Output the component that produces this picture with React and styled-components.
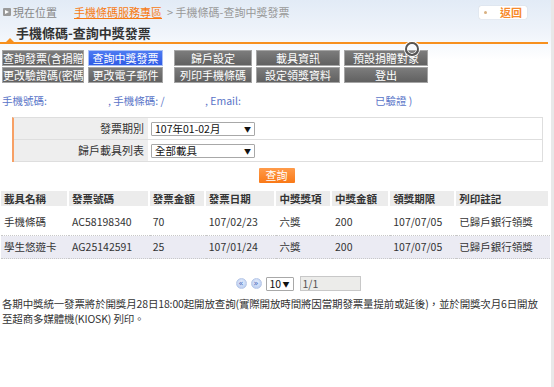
import React from "react";
import styled, { createGlobalStyle } from "styled-components";

const GlobalStyle = createGlobalStyle`
  html, body {
    margin: 0;
    padding: 0;
    background: #ffffff;
  }
  body {
    font-family: "Noto Sans CJK TC", "Liberation Sans", sans-serif;
    font-size: 11px;
    color: #333;
  }
`;

const Page = styled.div`
  width: 554px;
  height: 387px;
  overflow: hidden;
  position: relative;
  background: linear-gradient(to bottom, #e2ebf6 0px, #eef3fa 30px, #ffffff 60px);
  border-right: 3px solid #e8e8e8;
  box-sizing: border-box;
`;

const TopBar = styled.div`
  display: flex;
  align-items: center;
  justify-content: space-between;
  height: 24px;
  padding: 0 24px 0 3px;
`;

const Crumbs = styled.div`
  display: flex;
  align-items: center;
  font-size: 11px;
  line-height: 14px;
  color: #888;
`;

const CrumbIcon = styled.span`
  display: inline-block;
  width: 8px;
  height: 8px;
  background: #9a9a9a;
  border-radius: 1px;
  margin-right: 2px;
  position: relative;
  &::after {
    content: "";
    position: absolute;
    left: 2px;
    top: 2px;
    border-left: 4px solid #fff;
    border-top: 2px solid transparent;
    border-bottom: 2px solid transparent;
  }
`;

const CrumbLink = styled.a`
  color: #f77b14;
  text-decoration: underline;
  margin-left: 17px;
`;

const CrumbCurrent = styled.span`
  margin-left: 5px;
  color: #999;
`;

const BackButton = styled.div`
  width: 48px;
  height: 13px;
  background: #fff;
  border-radius: 2px;
  box-shadow: 0 0 1px #bbb;
  display: flex;
  align-items: center;
  font-size: 11px;
  font-weight: bold;
  color: #f78a2c;
  &::before {
    content: "";
    width: 3px;
    height: 3px;
    border-radius: 50%;
    background: #d8b080;
    margin: 0 13px 0 5px;
  }
`;

const TitleBar = styled.div`
  position: relative;
  height: 18px;
  border-bottom: 2px solid #f7901e;
  margin-right: 3px;
  padding-left: 16px;
  font-size: 13px;
  font-weight: bold;
  line-height: 18px;
  color: #333;
  &::after {
    content: "";
    position: absolute;
    left: 6px;
    bottom: 0;
    border-left: 4px solid transparent;
    border-right: 4px solid transparent;
    border-bottom: 4px solid #f7901e;
  }
`;

const Menu = styled.div`
  display: grid;
  grid-template-columns: 82px 75px 85px 84px 84px;
  column-gap: 4px;
  row-gap: 1px;
  padding: 6px 0 0 2px;
  width: 440px;
  & > :nth-child(5n + 3) {
    margin-left: 7px;
  }
`;

const MenuButton = styled.div`
  height: 14px;
  line-height: 14px;
  font-size: 11px;
  text-align: center;
  white-space: nowrap;
  overflow: hidden;
  color: #fff;
  background: ${(p) =>
    p.active
      ? "linear-gradient(#4d7bf2, #2f5be6)"
      : "linear-gradient(#7c7c7c, #616161)"};
  border: 1px solid ${(p) => (p.active ? "#a9bff5" : "#a5a5a5")};
`;

const InfoLine = styled.div`
  display: flex;
  padding: 11px 0 0 2px;
  font-size: 10.5px;
  line-height: 14px;
  color: #5a75c8;
`;

const InfoItem = styled.span`
  width: ${(p) => p.w}px;
  white-space: nowrap;
`;

const QueryForm = styled.div`
  margin: 9px 8px 0 12px;
  border-left: 2px solid #f7a065;
  border-top: 1px solid #dedede;
  border-right: 1px solid #dedede;
`;

const FormRow = styled.div`
  display: flex;
  height: 21px;
  border-bottom: 1px solid #dedede;
`;

const FormLabel = styled.div`
  width: 130px;
  background: #eeeeee;
  text-align: right;
  padding-right: 4px;
  font-size: 11px;
  line-height: 21px;
  color: #333;
`;

const FormCell = styled.div`
  flex: 1;
  display: flex;
  align-items: center;
  padding-left: 3px;
  background: #fff;
`;

const SelectBox = styled.div`
  width: ${(p) => p.w || 96}px;
  height: 12px;
  border: 1px solid #a8a8a8;
  border-radius: 1px;
  background: #fff;
  display: flex;
  align-items: center;
  justify-content: space-between;
  padding: 0 3px;
  font-size: 10.5px;
  line-height: 12px;
  color: #111;
  box-sizing: content-box;
`;

const Arrow = styled.span`
  font-size: 7px;
  color: #111;
`;

const SubmitRow = styled.div`
  display: flex;
  justify-content: center;
  padding: 6px 0 0 0;
  margin-left: 2px;
`;

const SubmitButton = styled.div`
  width: 36px;
  height: 15px;
  background: linear-gradient(#ff9b4a, #f97917);
  color: #fff;
  font-size: 11px;
  line-height: 15px;
  text-align: center;
  border-radius: 1px;
`;

const Results = styled.table`
  margin: 8px 0 0 1px;
  width: 549px;
  border-collapse: separate;
  border-spacing: 0;
  font-size: 10.5px;
  color: #333;
`;

const Th = styled.th`
  height: 15px;
  background: #ececec;
  border-right: 2px solid #fff;
  text-align: left;
  padding: 0 0 0 3px;
  font-weight: bold;
  line-height: 15px;
  color: #333;
  width: ${(p) => p.w}px;
`;

const Tr = styled.tr`
  background: ${(p) => (p.alt ? "#ebebf3" : "#ffffff")};
`;

const Td = styled.td`
  height: ${(p) => (p.first ? 26 : 22)}px;
  padding: ${(p) => (p.first ? "3px 0 0 3px" : "0 0 0 3px")};
  border-bottom: 1px dotted #c8c8c8;
  line-height: 14px;
  white-space: nowrap;
`;

const Pager = styled.div`
  display: flex;
  align-items: center;
  justify-content: center;
  gap: 4px;
  padding: 17px 0 0 45px;
`;

const PageDot = styled.span`
  width: 11px;
  height: 11px;
  border-radius: 50%;
  background: radial-gradient(circle at 50% 40%, #eef4ff, #a9c1ec);
  border: 1px solid #b8c8e8;
  box-sizing: border-box;
  display: flex;
  align-items: center;
  justify-content: center;
  font-size: 8px;
  line-height: 8px;
  color: #3f63b8;
  font-family: "DejaVu Sans", sans-serif;
`;

const PageInput = styled.div`
  width: 57px;
  height: 13px;
  margin-left: 2px;
  background: #ececea;
  border: 1px solid #c8c8c8;
  font-size: 10.5px;
  line-height: 13px;
  padding-left: 2px;
  color: #555;
`;

const Note = styled.p`
  margin: 5px 2px 0 2px;
  font-size: 10.5px;
  line-height: 15px;
  color: #333;
  letter-spacing: -0.15px;
  white-space: nowrap;
`;

const Cursor = styled.span`
  position: absolute;
  left: 405px;
  top: 42px;
  width: 14px;
  height: 14px;
  border-radius: 50%;
  border: 2px solid #555;
  box-shadow: 0 0 0 1px #fff, inset 0 0 0 1px #fff;
  box-sizing: border-box;
`;

const menuItems = [
  "查詢發票(含捐贈",
  "查詢中獎發票",
  "歸戶設定",
  "載具資訊",
  "預設捐贈對象",
  "更改驗證碼(密碼",
  "更改電子郵件",
  "列印手機條碼",
  "設定領獎資料",
  "登出",
];

const columns = [
  { label: "載具名稱", w: 64 },
  { label: "發票號碼", w: 77 },
  { label: "發票金額", w: 54 },
  { label: "發票日期", w: 67 },
  { label: "中獎獎項", w: 53 },
  { label: "中獎金額", w: 56 },
  { label: "領獎期限", w: 62 },
  { label: "列印註記", w: 90 },
];

const rows = [
  ["手機條碼", "AC58198340", "70", "107/02/23", "六獎", "200", "107/07/05", "已歸戶銀行領獎"],
  ["學生悠遊卡", "AG25142591", "25", "107/01/24", "六獎", "200", "107/07/05", "已歸戶銀行領獎"],
];

export default function App() {
  return (
    <Page>
      <GlobalStyle />
      <TopBar>
        <Crumbs>
          <CrumbIcon />
          現在位置
          <CrumbLink>手機條碼服務專區</CrumbLink>
          <CrumbCurrent>&gt; 手機條碼-查詢中獎發票</CrumbCurrent>
        </Crumbs>
        <BackButton>返回</BackButton>
      </TopBar>
      <TitleBar>手機條碼-查詢中獎發票</TitleBar>

      <Menu>
        {menuItems.map((m, i) => (
          <MenuButton key={i} active={i === 1}>
            {m}
          </MenuButton>
        ))}
      </Menu>

      <InfoLine>
        <InfoItem w={106}>手機號碼:</InfoItem>
        <InfoItem w={97}>, 手機條碼: /</InfoItem>
        <InfoItem w={170}>, Email:</InfoItem>
        <InfoItem w={60}>已驗證 )</InfoItem>
      </InfoLine>

      <QueryForm>
        <FormRow>
          <FormLabel>發票期別</FormLabel>
          <FormCell>
            <SelectBox>
              <span>107年01-02月</span>
              <Arrow>▼</Arrow>
            </SelectBox>
          </FormCell>
        </FormRow>
        <FormRow>
          <FormLabel>歸戶載具列表</FormLabel>
          <FormCell>
            <SelectBox>
              <span>全部載具</span>
              <Arrow>▼</Arrow>
            </SelectBox>
          </FormCell>
        </FormRow>
      </QueryForm>

      <SubmitRow>
        <SubmitButton>查詢</SubmitButton>
      </SubmitRow>

      <Results>
        <thead>
          <tr>
            {columns.map((c) => (
              <Th key={c.label} w={c.w}>
                {c.label}
              </Th>
            ))}
          </tr>
        </thead>
        <tbody>
          {rows.map((r, i) => (
            <Tr key={i} alt={i % 2 === 1}>
              {r.map((cell, j) => (
                <Td key={j} first={i === 0}>
                  {cell}
                </Td>
              ))}
            </Tr>
          ))}
        </tbody>
      </Results>

      <Pager>
        <PageDot>«</PageDot>
        <PageDot>»</PageDot>
        <SelectBox w={20}>
          <span>10</span>
          <Arrow>▼</Arrow>
        </SelectBox>
        <PageInput>1/1</PageInput>
      </Pager>

      <Note>
        各期中獎統一發票將於開獎月28日18:00起開放查詢(實際開放時間將因當期發票量提前或延後)，並於開獎次月6日開放
        <br />
        至超商多媒體機(KIOSK) 列印。
      </Note>

      <Cursor />
    </Page>
  );
}
